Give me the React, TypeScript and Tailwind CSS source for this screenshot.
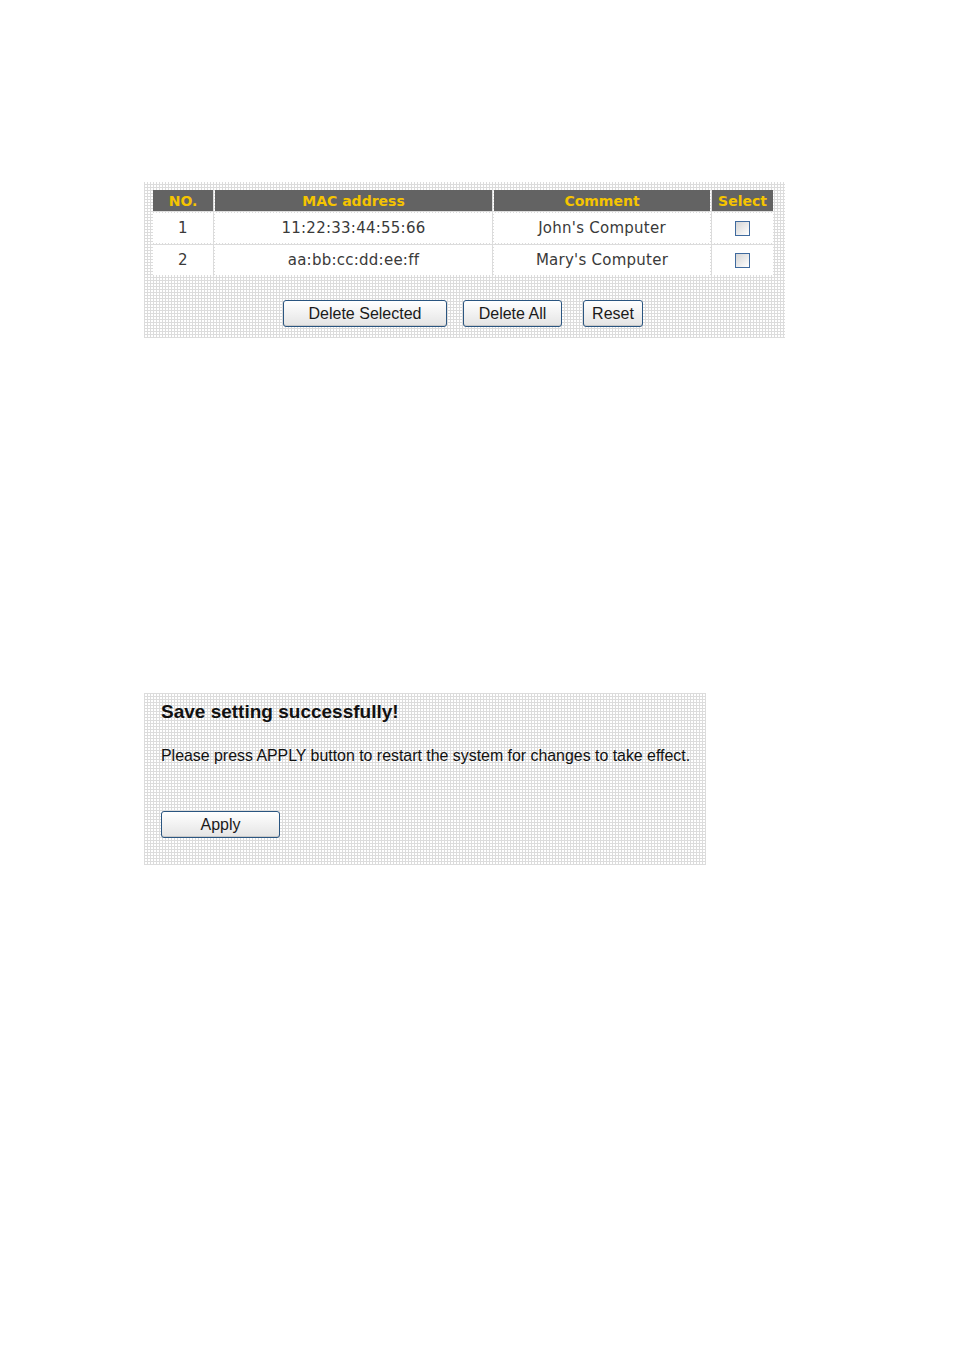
import React from "react";

const grid =
  "bg-white bg-[image:repeating-linear-gradient(0deg,#dcdcdc_0px,#dcdcdc_1px,transparent_1px,transparent_3px),repeating-linear-gradient(90deg,#dcdcdc_0px,#dcdcdc_1px,transparent_1px,transparent_3px)]";

const rows = [
  { no: 1, mac: "11:22:33:44:55:66", comment: "John's Computer" },
  { no: 2, mac: "aa:bb:cc:dd:ee:ff", comment: "Mary's Computer" },
];

function Btn({ label, w }: { label: string; w: string }) {
  return (
    <button
      className={`${w} h-[27px] rounded-[3px] border border-[#2a5580] bg-gradient-to-b from-white to-[#e4e4e4] text-[16px] leading-none text-[#1a1a1a] font-['Liberation_Sans',Arial,sans-serif] shadow-[inset_0_-1px_0_#c8c8c8]`}
    >
      {label}
    </button>
  );
}

function Check() {
  return (
    <span className="inline-block w-[15px] h-[15px] border-[1.5px] border-[#3f6a9e] bg-gradient-to-br from-[#d4d4d4] to-white align-middle" />
  );
}

export default function App() {
  return (
    <div className="min-h-[1350px] bg-white pt-[182px] pl-[144px]">
      {/* MAC filter table */}
      <div className={`w-[641px] h-[156px] pt-[6px] pl-[7px] ${grid}`}>
        <table className="border-separate border-spacing-[2px] font-['DejaVu_Sans',Verdana,sans-serif]">
          <thead>
            <tr className="h-[21px] text-[14px] font-bold leading-[19px] text-[#f5c400]">
              <th className="w-[60px] bg-[#636363] p-0 pt-px">NO.</th>
              <th className="w-[277px] bg-[#636363] p-0 pt-px">MAC address</th>
              <th className="w-[216px] bg-[#636363] p-0 pt-px">Comment</th>
              <th className="w-[61px] bg-[#636363] p-0 pt-px">Select</th>
            </tr>
          </thead>
          <tbody>
            {rows.map((r) => (
              <tr key={r.no} className="h-[30px] text-[15px] tracking-[0.25px] text-[#3a3a3a] text-center">
                <td className="bg-white p-0 pt-px">{r.no}</td>
                <td className="bg-white p-0 pt-px">{r.mac}</td>
                <td className="bg-white p-0 pt-px">{r.comment}</td>
                <td className="bg-white p-0">
                  <Check />
                </td>
              </tr>
            ))}
          </tbody>
        </table>
        <div className="flex mt-[23px] ml-[132px]">
          <Btn label="Delete Selected" w="w-[164px]" />
          <div className="w-[16px]" />
          <Btn label="Delete All" w="w-[99px]" />
          <div className="w-[21px]" />
          <Btn label="Reset" w="w-[60px]" />
        </div>
      </div>

      {/* Save result */}
      <div
        className={`mt-[355px] w-[562px] h-[172px] pl-[17px] pt-[7px] ${grid} font-['Liberation_Sans',Arial,sans-serif] text-[#111]`}
      >
        <h2 className="text-[19px] font-bold leading-[24px]">Save setting successfully!</h2>
        <p className="mt-[22px] text-[15.9px] leading-[20px]">
          Please press APPLY button to restart the system for changes to take effect.
        </p>
        <div className="mt-[45px]">
          <Btn label="Apply" w="w-[119px]" />
        </div>
      </div>
    </div>
  );
}
